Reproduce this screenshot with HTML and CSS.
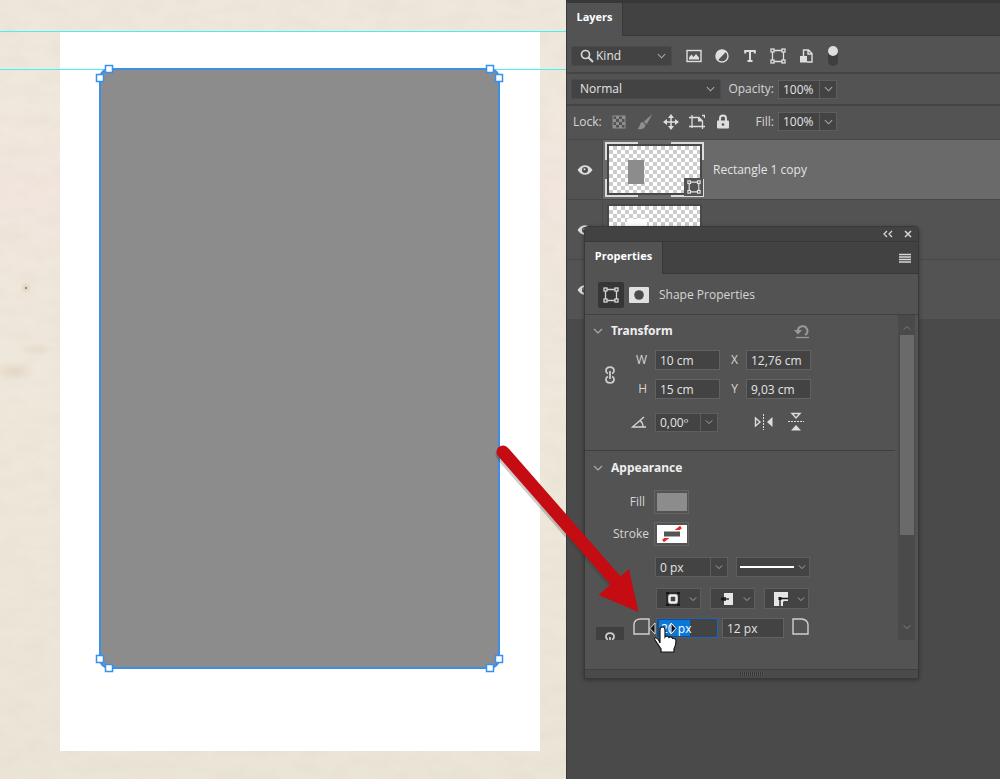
FILE: index.html
```html
<!DOCTYPE html>
<html lang="en">
<head>
<meta charset="utf-8">
<title>Layers and Properties</title>
<link rel="stylesheet" href="styles.css">
</head>
<body>
<svg class="defs" width="0" height="0" aria-hidden="true">
  <defs>
    <symbol id="chev" viewBox="0 0 10 6"><path d="M1 1l4 4 4-4" fill="none" stroke="currentColor" stroke-width="1.2"/></symbol>
    <symbol id="shape" viewBox="0 0 16 16">
      <g fill="none" stroke="currentColor" stroke-width="1.3"><path d="M4 2.500h8M4 13.500h8M2.500 4v8M13.500 4v8"/><rect x="1" y="1" width="3" height="3"/><rect x="12" y="1" width="3" height="3"/><rect x="1" y="12" width="3" height="3"/><rect x="12" y="12" width="3" height="3"/></g>
    </symbol>
    <symbol id="eye" viewBox="0 0 16 12"><path d="M.5 6C3 2.600 5.300 1.200 8 1.200S13 2.600 15.500 6C13 9.400 10.700 10.800 8 10.800S3 9.400.5 6z" fill="currentColor"/><circle cx="8" cy="6" r="3" fill="#4c4c4c"/><circle cx="7.500" cy="5.200" r="1" fill="currentColor"/></symbol>
    <symbol id="link" viewBox="0 0 12 18"><g fill="none" stroke="currentColor" stroke-width="1.800"><path d="M4 7.500C2.600 7 2 6 2 4.800 2 2.600 3.800 1.200 6 1.200s4 1.400 4 3.600c0 1.200-.6 2.200-2 2.700M4 10.500c-1.400.5-2 1.500-2 2.700 0 2.200 1.800 3.600 4 3.600s4-1.400 4-3.600c0-1.200-.6-2.200-2-2.700M6 5v8"/></g></symbol>
  </defs>
</svg>
<main class="app">
  <section class="canvas" aria-label="Document canvas">
    <svg class="paper" aria-hidden="true" width="100%" height="100%">
      <defs>
        <filter id="grain" x="0" y="0" width="100%" height="100%"><feTurbulence type="fractalNoise" baseFrequency=".04 .07" numOctaves="4" seed="4"/><feColorMatrix values="0 0 0 0 .5  0 0 0 0 .45  0 0 0 0 .36  0 .5 0 0 -.17"/></filter>
        <radialGradient id="stain"><stop offset="0" stop-color="#cdb896" stop-opacity=".45"/><stop offset="1" stop-color="#cdb896" stop-opacity="0"/></radialGradient>
      </defs>
      <rect width="100%" height="100%" filter="url(#grain)" opacity=".3"/>
      <ellipse cx="14" cy="371" rx="22" ry="10" fill="url(#stain)" opacity=".7"/>
      <ellipse cx="36" cy="349" rx="18" ry="7" fill="url(#stain)" opacity=".5"/>
      <circle cx="26" cy="288" r="6" fill="url(#stain)"/>
      <circle cx="26" cy="288" r="1" fill="#9a6a43"/>
    </svg>
    <div class="artboard"></div>
    <svg class="drawing" aria-label="Selected rectangle with guides" width="566" height="779">
      <path d="M0 31.500H566M0 69.500H566" fill="none" stroke="#48f0f6" stroke-width="1"/>
      <rect x="100" y="69" width="399" height="599" rx="9" fill="#8c8c8c" stroke="#3d8fe6" stroke-width="2"/>
      <g fill="#fff" stroke="#3391f2" stroke-width="1.500">
        <rect x="105.500" y="65.500" width="7" height="7"/><rect x="96.500" y="74.500" width="7" height="7"/>
        <rect x="486.500" y="65.500" width="7" height="7"/><rect x="495.500" y="74.500" width="7" height="7"/>
        <rect x="96.500" y="655.500" width="7" height="7"/><rect x="105.500" y="664.500" width="7" height="7"/>
        <rect x="495.500" y="655.500" width="7" height="7"/><rect x="486.500" y="664.500" width="7" height="7"/>
      </g>
    </svg>
  </section>

  <section class="layers" aria-label="Layers panel">
    <div class="tabs"><button class="tab">Layers</button></div>
    <div class="bar filter">
      <label class="pick kind">
        <svg class="lead" width="14" height="14" viewBox="0 0 14 14"><circle cx="5.500" cy="5.500" r="4" fill="none" stroke="currentColor" stroke-width="1.700"/><path d="M8.500 8.500l4.500 4.500" stroke="currentColor" stroke-width="2"/></svg>
        <select aria-label="Filter kind"><option>Kind</option></select>
        <svg class="chev" width="9" height="6"><use href="#chev"/></svg>
      </label>
      <div class="icons">
        <button aria-label="Pixel layers"><svg width="16" height="16" viewBox="0 0 16 16"><rect x="1" y="2.500" width="14" height="11" fill="none" stroke="currentColor" stroke-width="1.400"/><path d="M3 11.500V9.500l2.500-3 2 2.500L10 6l3 3.500v2z" fill="currentColor"/></svg></button>
        <button aria-label="Adjustment layers"><svg width="16" height="16" viewBox="0 0 16 16"><circle cx="8" cy="8" r="6" fill="none" stroke="currentColor" stroke-width="1.400"/><path d="M12.400 3.600a6.200 6.200 0 0 0-8.800 8.800z" fill="currentColor"/></svg></button>
        <button aria-label="Type layers"><svg width="16" height="16" viewBox="0 0 16 16"><path d="M3.200 5.500V3h9.600v2.500M8 3v10M5.500 13h5" fill="none" stroke="currentColor" stroke-width="2"/></svg></button>
        <button aria-label="Shape layers"><svg width="16" height="16"><use href="#shape"/></svg></button>
        <button aria-label="Smart objects"><svg width="16" height="16" viewBox="0 0 16 16"><path d="M5.500 8V2h5L14 5.500V14H9M10 2v4h4" fill="none" stroke="currentColor" stroke-width="1.400"/><rect x="2" y="8" width="7" height="6.500" fill="currentColor"/></svg></button>
      </div>
      <button class="switch" aria-label="Toggle filter"></button>
    </div>
    <div class="bar blend">
      <label class="pick mode"><select aria-label="Blend mode"><option>Normal</option></select><svg class="chev" width="9" height="6"><use href="#chev"/></svg></label>
      <div class="amount"><label for="opacity">Opacity:</label><span class="combo"><input id="opacity" value="100%"><button aria-label="Opacity slider"><svg width="9" height="6"><use href="#chev"/></svg></button></span></div>
    </div>
    <div class="bar lock">
      <span class="lock-name">Lock:</span>
      <div class="icons">
        <button class="dim" aria-label="Lock transparency"><svg width="16" height="16" viewBox="0 0 16 16"><rect x="2" y="2" width="12" height="12" fill="none" stroke="currentColor"/><path d="M5 2h3v3H5zM11 2h3v3h-3zM2 5h3v3H2zM8 5h3v3H8zM5 8h3v3H5zM11 8h3v3h-3zM2 11h3v3H2zM8 11h3v3H8z" fill="currentColor"/></svg></button>
        <button class="dim" aria-label="Lock pixels"><svg width="16" height="16" viewBox="0 0 16 16"><path d="M15.500 0L7 7.500l2.500 3zM6 8C3 8 2.800 11 2.500 12.500L.5 15c3 .8 7.500 .2 8-4z" fill="currentColor"/></svg></button>
        <button aria-label="Lock position"><svg width="16" height="16" viewBox="0 0 16 16"><path d="M8 2v12M2 8h12" stroke="currentColor" stroke-width="1.500"/><path d="M8 0l3 4H5zM8 16l3-4H5zM0 8l4-3v6zM16 8l-4-3v6z" fill="currentColor"/></svg></button>
        <button aria-label="Lock artboard"><svg width="16" height="16" viewBox="0 0 16 16"><path d="M3 1v13M0 3.500h10l3.500 3.500V15M0 12.500h16M13 1.500h2.500V4" fill="none" stroke="currentColor" stroke-width="1.300"/><path d="M9 3v4.500h5z" fill="currentColor"/></svg></button>
        <button aria-label="Lock all"><svg width="16" height="16" viewBox="0 0 16 16"><rect x="2" y="6.500" width="12" height="8" rx="1" fill="currentColor"/><path d="M5 7V4.500a3 3 0 0 1 6 0V7" fill="none" stroke="currentColor" stroke-width="2"/><circle cx="8" cy="10.500" r="1.300" fill="#535353"/></svg></button>
      </div>
      <div class="amount"><label for="fill">Fill:</label><span class="combo"><input id="fill" value="100%"><button aria-label="Fill slider"><svg width="9" height="6"><use href="#chev"/></svg></button></span></div>
    </div>
    <ul class="list">
      <li class="layer selected">
        <button class="eye" aria-label="Hide layer"><svg width="16" height="12"><use href="#eye"/></svg></button>
        <div class="body">
          <div class="frame"><div class="thumb"><svg width="91" height="47" viewBox="0 0 91 47"><rect x="19" y="14" width="16" height="24" fill="#8c8c8c"/></svg></div><span class="badge"><svg width="14" height="14"><use href="#shape"/></svg></span></div>
          <span>Rectangle 1 copy</span>
        </div>
      </li>
      <li class="layer">
        <button class="eye" aria-label="Hide layer"><svg width="16" height="12"><use href="#eye"/></svg></button>
        <div class="body"><div class="frame"><div class="thumb"><svg width="91" height="47" viewBox="0 0 91 47"><rect x="18" y="13" width="20" height="30" fill="#fff"/></svg></div></div></div>
      </li>
      <li class="layer">
        <button class="eye" aria-label="Hide layer"><svg width="16" height="12"><use href="#eye"/></svg></button>
        <div class="body"></div>
      </li>
    </ul>
  </section>
</main>

<section class="props" aria-label="Properties panel">
  <div class="title">
    <button aria-label="Collapse"><svg width="10" height="8" viewBox="0 0 10 8"><path d="M4 1L1 4l3 3M9 1L6 4l3 3" fill="none" stroke="currentColor" stroke-width="1.300"/></svg></button>
    <button aria-label="Close"><svg width="8" height="8" viewBox="0 0 8 8"><path d="M1 1l6 6M7 1L1 7" stroke="currentColor" stroke-width="1.500"/></svg></button>
  </div>
  <div class="tabs"><button class="tab">Properties</button><button class="menu" aria-label="Panel menu"><svg width="12" height="10" viewBox="0 0 12 10"><path d="M0 1.500h12M0 4h12M0 6.500h12M0 9h12" stroke="currentColor" stroke-width="1.500"/></svg></button></div>
  <div class="kindbar">
    <button class="kindbtn on" aria-label="Shape"><svg width="16" height="16"><use href="#shape"/></svg></button>
    <button class="kindbtn" aria-label="Mask"><svg width="20" height="16" viewBox="0 0 20 16"><rect width="20" height="16" rx="1" fill="#e0e0e0"/><circle cx="10" cy="8" r="4.800" fill="#4a4a4a"/></svg></button>
    <span>Shape Properties</span>
  </div>
  <div class="scroll">
    <div class="content">
      <section class="group transform">
        <header><svg width="10" height="6"><use href="#chev"/></svg><h2>Transform</h2>
          <button class="reset" aria-label="Reset"><svg width="16" height="15" viewBox="0 0 16 15"><path d="M4 7A4.700 4.700 0 1 1 11 11" fill="none" stroke="currentColor" stroke-width="2"/><path d="M0 6h8L4 10.500z" fill="currentColor"/><path d="M2 13.500h13" stroke="currentColor" stroke-width="1.300"/></svg></button></header>
        <div class="fields">
          <button class="chain" aria-label="Link width and height"><svg width="12" height="18"><use href="#link"/></svg></button>
          <label for="w">W</label><input id="w" value="10 cm">
          <label for="x">X</label><input id="x" value="12,76 cm">
          <label for="h">H</label><input id="h" value="15 cm">
          <label for="y">Y</label><input id="y" value="9,03 cm">
        </div>
        <div class="rotate">
          <label for="angle" aria-label="Angle"><svg width="16" height="12" viewBox="0 0 16 12"><path d="M13 1L1.500 11H15M9 4.500c2 1.500 3 4 3 6.500" fill="none" stroke="currentColor" stroke-width="1.400"/></svg></label>
          <span class="combo wide"><input id="angle" value="0,00º"><button aria-label="Angle presets"><svg width="8" height="6"><use href="#chev"/></svg></button></span>
          <button class="flip" aria-label="Flip horizontal"><svg width="20" height="18" viewBox="0 0 20 18"><path d="M1.500 5v8l4.500-4z" fill="none" stroke="currentColor" stroke-width="1.400"/><path d="M18.500 4v10L13 9z" fill="currentColor"/><path d="M9.500 1v16" stroke="currentColor" stroke-dasharray="2 1"/></svg></button>
          <button class="flip" aria-label="Flip vertical"><svg width="18" height="20" viewBox="0 0 18 20"><path d="M5 1.500h8L9 6z" fill="none" stroke="currentColor" stroke-width="1.400"/><path d="M4 18.500h10L9 13z" fill="currentColor"/><path d="M1 9.500h16" stroke="currentColor" stroke-dasharray="2 1"/></svg></button>
        </div>
      </section>
      <section class="group look">
        <header><svg width="10" height="6"><use href="#chev"/></svg><h2>Appearance</h2></header>
        <div class="paint"><span>Fill</span><button class="swatch" aria-label="Fill colour"><svg width="30" height="18"><rect width="30" height="18" fill="#8c8c8c"/></svg></button></div>
        <div class="paint"><span>Stroke</span><button class="swatch" aria-label="Stroke colour"><svg width="30" height="18" viewBox="0 0 30 18"><rect width="30" height="18" fill="#fff"/><path d="M6 16L24 2" stroke="#e32b2b" stroke-width="3"/><rect x="6" y="5" width="18" height="8" fill="#fff"/><rect x="7" y="6.500" width="16" height="5" fill="#555"/></svg></button></div>
        <div class="row stroke-row"><span class="combo px"><input aria-label="Stroke width" value="0 px"><button aria-label="Stroke width slider"><svg width="8" height="6"><use href="#chev"/></svg></button></span>
          <button class="drop line" aria-label="Stroke type"><svg width="54" height="2"><rect width="54" height="2" fill="#fff"/></svg><svg width="8" height="6"><use href="#chev"/></svg></button></div>
        <div class="row ends">
          <button class="drop" aria-label="Stroke alignment"><svg width="16" height="14" viewBox="0 0 16 14"><rect x="2" y="1" width="12" height="12" fill="none" stroke="#161616"/><path d="M1 0h3v2H1zM12 0h3v2h-3zM1 12h3v2H1zM12 12h3v2h-3z" fill="#161616"/><rect x="4.500" y="3.500" width="7" height="7" rx="1" fill="#444" stroke="#eee" stroke-width="2.500"/></svg><svg width="8" height="6"><use href="#chev"/></svg></button>
          <button class="drop" aria-label="Stroke caps"><svg width="16" height="14" viewBox="0 0 16 14"><path d="M5 1h9v4H5zM5 9h9v4H5z" fill="#e6e6e6"/><path d="M7 4h7v6H7z" fill="#e6e6e6"/><path d="M4 7h6" stroke="#161616" stroke-width="1.300"/><rect x="2" y="5.500" width="3" height="3" fill="#161616"/></svg><svg width="8" height="6"><use href="#chev"/></svg></button>
          <button class="drop" aria-label="Stroke corners"><svg width="16" height="14" viewBox="0 0 16 14"><path d="M1 0h14v9h-4l-1 1v4H1z" fill="#e6e6e6"/><path d="M15 6.500H7V14" fill="none" stroke="#161616" stroke-width="1.300"/><rect x="5.500" y="5" width="3" height="3" fill="#161616"/></svg><svg width="8" height="6"><use href="#chev"/></svg></button>
        </div>
        <div class="row corners">
          <button class="chain-box" aria-label="Link corner radii"><svg width="12" height="18"><use href="#link"/></svg></button>
          <svg width="17" height="17" viewBox="0 0 17 17"><path d="M1 16V7q0-6 7-6h8v15z" fill="none" stroke="#d0d0d0" stroke-width="1.400"/></svg>
          <input class="active" aria-label="Top left radius" value="20 px">
          <input aria-label="Top right radius" value="12 px">
          <svg width="17" height="17" viewBox="0 0 17 17"><path d="M1 16V1h9q6 1 6 6v9z" fill="none" stroke="#d0d0d0" stroke-width="1.400"/></svg>
        </div>
      </section>
    </div>
    <div class="track"><svg width="8" height="6" viewBox="0 0 10 6"><path d="M1 5l4-4 4 4" fill="none" stroke="currentColor"/></svg><div class="grab"></div><svg width="8" height="6"><use href="#chev"/></svg></div>
  </div>
  <div class="grip"><i></i></div>
</section>

<svg class="overlay" aria-hidden="true" width="700" height="680" viewBox="0 0 700 680">
  <path d="M502 455L615 584" stroke="#333" stroke-opacity=".25" stroke-width="13" stroke-linecap="round"/>
  <path d="M503 452L616 581" stroke="#c50c12" stroke-width="13" stroke-linecap="round"/>
  <path d="M629 569L638.500 612 598.500 595z" fill="#c50c12"/>
  <path d="M655 623v11l-5-5.500z" fill="#111" stroke="#fff" stroke-width=".8"/>
  <path d="M671 623v11l5-5.500z" fill="#111" stroke="#fff" stroke-width="1"/>
  <path d="M660 643v-13c0-4 5-4 5 0v7c1-1.500 3.500-1 4 .5 1.300-1 3.300-.4 3.800 1 1.500-.6 3.200.2 3.200 2.500 0 4-1 6-2 8v3h-13v-3c-2-3-4-6-6-9-1.500-2.500 2-4.500 5 3z" fill="#fff" stroke="#171717" stroke-width="1.200"/>
</svg>
</body>
</html>
```
FILE: styles.css
```css
* { box-sizing: border-box; }
body { margin: 0; background: #4a4a4a; color: #d6d6d6; font: 12px/16px "Open Sans", "Noto Sans", sans-serif; }
button, input, select { font: inherit; color: inherit; margin: 0; border-radius: 0; }
button { display: flex; align-items: center; justify-content: center; padding: 0; border: 0; background: none; }
svg { display: block; flex: none; }
.defs { position: absolute; }
h2 { margin: 0; font: 700 12px/18px "Noto Sans", sans-serif; color: #eee; }
input { min-width: 0; height: 20px; padding: 0 4px; border: 1px solid #626262; background: #434343; color: #e4e4e4; outline: 0; }

.app { display: grid; grid-template-columns: 566px 1fr; min-height: 100vh; }
.canvas { display: grid; overflow: hidden; background: linear-gradient(#eee7db, #f0e8dd 90px, #f2e6de 190px, #efe7dc 300px, #eee8db 450px, #ebe5d8); }
.canvas > * { grid-area: 1 / 1; }
.artboard { margin: 32px 26px 28px 60px; background: #fff; }

.layers { border-left: 1px solid #383838; background: #4a4a4a; }
.tabs { display: flex; background: #424242; border-bottom: 1px solid #383838; }
.tab { background: #535353; color: #fff; font-size: 11px; font-weight: 700; border-right: 1px solid #383838; margin-bottom: -1px; }
.layers .tabs { height: 36px; border-top: 3px solid #383838; }
.layers .tab { width: 56px; padding-bottom: 5px; }
.bar { display: flex; align-items: center; background: #535353; border-bottom: 2px solid #444; padding-left: 4px; }
.filter { height: 38px; padding-top: 4px; }
.blend { height: 32px; }
.lock { height: 33px; border: 0; padding-left: 6px; padding-bottom: 2px; }
.pick { display: grid; grid-template-columns: 1fr 14px; align-items: center; height: 20px; background: #434343; border: 1px solid #4b4b4b; border-radius: 2px; }
.pick select { grid-area: 1 / 1 / 2 / 3; width: 100%; appearance: none; border: 0; background: none; padding: 0 8px; outline: 0; color: #e4e4e4; }
.pick .chev { grid-area: 1 / 2; color: #aaa; }
.pick .lead { grid-area: 1 / 1; margin-left: 8px; }
.kind { width: 101px; }
.kind select { padding-left: 24px; }
.mode { width: 150px; }
.icons { display: flex; align-items: center; color: #dedede; }
.filter .icons { gap: 12px; margin-left: 14px; }
.lock .icons { gap: 10px; width: 122px; }
.lock-name { width: 38px; }
.dim { color: #8f8f8f; }
.switch { width: 10px; height: 20px; margin-left: 14px; background: #3e3e3e; border-radius: 5px; align-items: flex-start; }
.switch::before { content: ""; width: 10px; height: 10px; border-radius: 50%; background: #dedede; }
.amount { display: flex; align-items: center; justify-content: flex-end; gap: 4px; width: 116px; }
.lock .amount { width: 104px; }
.combo { display: flex; width: 59px; height: 19px; border: 1px solid #5e5e5e; background: #434343; }
.combo input { flex: 1; width: 0; height: 100%; border: 0; background: none; }
.combo button { width: 17px; border-left: 1px solid #5e5e5e; color: #aaa; }
.list { margin: 0; padding: 0; list-style: none; background: #535353; }
.layer { display: grid; grid-template-columns: 36px 1fr; height: 60px; border-top: 1px solid #474747; }
.eye { border-right: 1px solid #4a4a4a; color: #dcdcdc; }
.body { display: flex; align-items: center; gap: 9px; padding-left: 2px; color: #e4e4e4; }
.selected .body { background: #6a6a6a; }
.frame { position: relative; padding: 3px; }
.selected .frame { background: linear-gradient(90deg, transparent 33px, #6a6a6a 33px calc(100% - 33px), transparent 0), linear-gradient(transparent 18px, #6a6a6a 18px calc(100% - 18px), transparent 0), #dcdcdc; }
.thumb { border: 2px solid #484848; background: repeating-conic-gradient(#ccc 0 25%, #fff 0 50%) 0 0 / 8px 8px; margin: -1px; }
.badge { position: absolute; right: 1px; bottom: 1px; width: 19px; height: 18px; display: grid; place-items: center; background: #535353; }

.props { position: absolute; left: 584px; top: 226px; width: 335px; background: #535353; border: 1px solid #383838; border-radius: 4px 4px 0 0; box-shadow: 0 1px 4px #0005; }
.title { display: flex; align-items: center; justify-content: flex-end; gap: 11px; height: 15px; padding-right: 6px; background: #424242; border-bottom: 1px solid #383838; border-radius: 4px 4px 0 0; }
.props .tabs { height: 32px; justify-content: space-between; }
.props .tab { width: 78px; padding-bottom: 4px; }
.menu { width: 26px; }
.kindbar { display: flex; align-items: center; gap: 5px; height: 41px; padding-left: 13px; padding-top: 1px; border-bottom: 1px solid #404040; }
.kindbtn { height: 26px; }
.kindbtn.on { width: 26px; background: #363636; border-radius: 2px; }
.kindbar span { margin-left: 5px; }
.scroll { display: grid; grid-template-columns: 1fr 17px; height: 325px; padding-right: 3px; overflow: hidden; }
.content { min-width: 0; overflow: hidden; }
.track { display: flex; flex-direction: column; align-items: center; justify-content: space-between; padding: 10px 2px; background: #4a4a4a; color: #888; }
.grab { width: 14px; height: 200px; margin: 4px 0 auto; background: #6a6a6a; }
.group { margin-right: 3px; }
.group header { display: flex; align-items: center; gap: 8px; padding-left: 8px; color: #aaa; }
.transform { height: 136px; padding-top: 7px; border-bottom: 1px solid #3e3e3e; }
.reset { margin-left: 113px; color: #999; }
.fields { display: grid; grid-template-columns: 25px 25px 65px 18px 65px; grid-template-rows: 20px 20px; gap: 9px 4px; margin: 10px 0 0 12px; align-items: center; }
.fields label { text-align: right; padding-right: 4px; }
.chain { grid-row: 1 / 3; color: #ccc; }
.rotate { display: flex; align-items: center; margin-top: 13px; padding-left: 46px; }
.rotate label { width: 24px; }
.wide { width: 63px; }
.flip { width: 32px; color: #ddd; }
.wide + .flip { margin-left: 30px; }
.look { padding-top: 8px; }
.paint { display: grid; grid-template-columns: 64px 35px; gap: 5px; align-items: center; height: 24px; margin-top: 8px; }
.look header + .paint { margin-top: 13px; }
.paint span { text-align: right; }
.paint:nth-of-type(1) span { padding-right: 4px; }
.swatch { width: 35px; height: 24px; border: 1px solid #646464; }
.row { display: flex; align-items: center; }
.stroke-row { gap: 8px; margin-top: 11px; padding-left: 70px; }
.px { width: 73px; height: 20px; }
.drop { justify-content: flex-start; gap: 8px; width: 45px; height: 21px; background: #434343; border: 1px solid #5e5e5e; color: #aaa; padding: 0 0 0 8px; }
.line { width: 74px; height: 20px; gap: 4px; padding: 0 0 0 3px; }
.ends { gap: 9px; margin-top: 11px; padding-left: 71px; }
.corners { align-items: flex-start; margin-top: 9px; padding-left: 11px; }
.chain-box { width: 28px; height: 28px; margin: 9px 9px 0 0; background: #404040; color: #ccc; }
.corners input { width: 62px; margin-right: 4px; }
.corners .active { margin-left: 6px; border-color: #1d64c0; color: #fff; background: linear-gradient(#0b78d8 0 0) 2px 1px / 31px 16px no-repeat #434343; }
.corners input + svg { margin-left: 4px; }
.grip { display: flex; align-items: center; justify-content: center; height: 9px; margin-top: 29px; border-top: 1px solid #404040; background: #4a4a4a; }
.grip i { width: 24px; height: 4px; background: repeating-linear-gradient(90deg, #383838 0 1px, #555 1px 2px); }
.overlay { position: absolute; left: 0; top: 0; pointer-events: none; }
```
